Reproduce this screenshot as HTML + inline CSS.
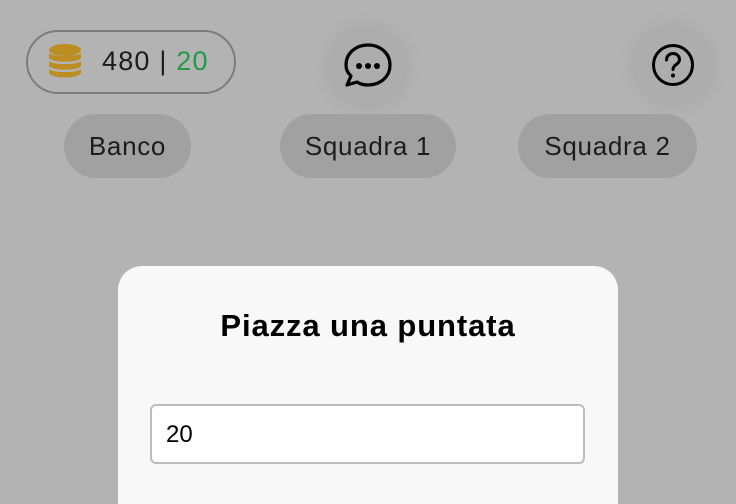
<!DOCTYPE html>
<html style="overflow:hidden;height:504px"><head><style>
body{margin:0;width:736px;height:504px;background:#b3b3b3;position:relative;overflow:hidden;font-family:"Liberation Sans",sans-serif;}
.coin{position:absolute;left:26px;top:30px;width:206px;height:60px;border:2px solid #7c7c7c;border-radius:32px;}
.coin span{position:absolute;left:74px;top:14px;font-size:27px;letter-spacing:1.2px;color:#1c1c1c;}
.circ{position:absolute;width:78px;height:78px;border-radius:50%;background:#adadad;box-shadow:0 0 18px rgba(0,0,0,0.08);}
.pill{position:absolute;top:114px;height:64px;border-radius:32px;background:#a1a1a1;font-size:26px;letter-spacing:0.7px;color:#1c1c1c;line-height:64px;text-align:center;}
.modal{position:absolute;left:118px;top:266px;width:500px;height:238px;background:#f8f8f8;border-radius:24px 24px 0 0;}
.modal h1{margin:0;position:absolute;top:42px;width:100%;text-align:center;font-size:31px;letter-spacing:0.9px;font-weight:bold;color:#000;}
.inp{position:absolute;left:32px;top:138px;width:417px;height:56px;border:2px solid #bcbcbc;border-radius:6px;background:#fff;font-size:24px;line-height:58px;padding-left:14px;}
</style></head><body>
<div class="coin">
<svg style="position:absolute;left:20px;top:12px" width="34" height="36" viewBox="0 0 34 36">
<g fill="#bb8e22">
<ellipse cx="17" cy="6" rx="16" ry="6"/>
<path d="M1 9c3 4 29 4 32 0v5c-3 5-29 5-32 0z"/>
<path d="M1 17c3 4 29 4 32 0v5c-3 5-29 5-32 0z"/>
<path d="M1 25c3 4 29 4 32 0v4c-3 6-29 6-32 0z"/>
</g></svg>
<span>480 | <b style="font-weight:normal;color:#1f9a48">20</b></span>
</div>
<div class="circ" style="left:328px;top:28px"></div>
<svg style="position:absolute;left:342px;top:41px" width="52" height="52" viewBox="0 0 52 52">
<path d="M26 4C38 4 48 12 48 24S38 44 26 44c-4 0-8-1-11-3L5 44l4-9C5 31 4 28 4 24 4 12 14 4 26 4z" fill="none" stroke="#000" stroke-width="3.2" stroke-linejoin="round"/>
<circle cx="17" cy="25" r="3" /><circle cx="26" cy="25" r="3"/><circle cx="35" cy="25" r="3"/>
</svg>
<div class="circ" style="left:634px;top:26px"></div>
<svg style="position:absolute;left:651px;top:43px" width="44" height="44" viewBox="0 0 44 44">
<circle cx="22" cy="22" r="19.5" fill="none" stroke="#000" stroke-width="3"/>
<path d="M15.5 17c0-4 3-6.5 6.5-6.5s6.5 2.5 6.5 6c0 5-6.5 5-6.5 10" fill="none" stroke="#000" stroke-width="3" stroke-linecap="round"/>
<circle cx="22" cy="32.5" r="2"/>
</svg>
<div class="pill" style="left:64px;width:127px">Banco</div>
<div class="pill" style="left:280px;width:176px">Squadra 1</div>
<div class="pill" style="left:518px;width:179px">Squadra 2</div>
<div class="modal"><h1>Piazza una puntata</h1><div class="inp">20</div></div>
</body></html>
